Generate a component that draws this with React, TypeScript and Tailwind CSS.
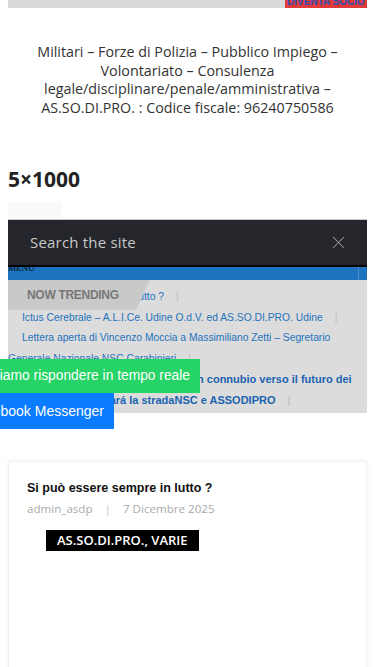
import { X } from "lucide-react";

const sans = "font-['Open_Sans',sans-serif]";
const arial = "font-['Liberation_Sans',Arial,sans-serif]";

function Sep() {
  return <span className="inline-block font-normal text-[#bbb] px-[12px]">|</span>;
}

export default function App() {
  return (
    <div className="w-[375px] min-h-[667px] bg-white relative overflow-hidden">
      {/* Top bar */}
      <div className="flex px-2 h-2">
        <div className="flex-1 bg-[#d9d9d9]" />
        <div className={`w-[82px] bg-[#e23a3a] overflow-hidden ${arial}`}>
          <div className="text-[10px] font-bold leading-[12px] -mt-[4px] text-[#2d4fb5] text-center whitespace-nowrap">DIVENTA SOCIO</div>
        </div>
      </div>

      {/* Tagline */}
      <p className={`${sans} mt-[35px] text-center text-[14.3px] leading-[18.5px] text-[#333] whitespace-nowrap`}>
        Militari – Forze di Polizia – Pubblico Impiego –<br />
        Volontariato – Consulenza<br />
        legale/disciplinare/penale/amministrativa –<br />
        AS.SO.DI.PRO. : Codice fiscale: 96240750586
      </p>

      {/* 5x1000 */}
      <h2 className={`${sans} mt-[50px] px-2 text-[21px] font-bold leading-[24px] text-[#222]`}>5×1000</h2>

      <div className="mx-2 mt-[11px] w-[53px] h-[15px] bg-[#f9f9f9]" />

      {/* Search overlay */}
      <div className="mx-2 mt-[2px]">
        <div className="h-[46px] bg-[#25262b] border-t border-[#c9c9c9] flex items-center justify-between pl-[22px] pr-[18px]">
          <span className={`${sans} text-[15px] text-[#c8c8c8] tracking-[0.2px]`}>Search the site</span>
          <X size={21} strokeWidth={1.2} className="text-[#9a9a9a]" />
        </div>
        <div className="h-[2px] bg-black" />
        <div className="h-[13px] bg-[#1e73be] overflow-hidden flex">
          <span className="font-['Liberation_Serif',serif] text-[9px] leading-[9px] -mt-[3px] text-black flex-1">MENU</span>
          <span className="w-px bg-[#4b8fd0] mr-[8px]" />
        </div>

        {/* Trending */}
        <div className={`relative bg-[#dcdcdc] pt-[7px] pb-[2px] ${arial} text-[10.3px] leading-[20.6px] text-[#1e73be]`}>
          <div className="pl-[14px] whitespace-nowrap">Si può essere sempre in lutto ?<Sep /></div>
          <div className="pl-[14px] whitespace-nowrap">Ictus Cerebrale – A.L.I.Ce. Udine O.d.V. ed AS.SO.DI.PRO. Udine<Sep /></div>
          <div className="pl-[14px] whitespace-nowrap">Lettera aperta di Vincenzo Moccia a Massimiliano Zetti – Segretario</div>
          <div className="whitespace-nowrap">Generale Nazionale NSC Carabinieri<Sep /></div>
          <div className="pl-[14px] whitespace-nowrap font-bold text-[11px] text-[#1a63b0]">NSC Carabinieri e ASSODIPRO: un connubio verso il futuro dei</div>
          <div className="whitespace-nowrap font-bold text-[11px] text-[#1a63b0]">cittadini: l'Europa sará la stradaNSC e ASSODIPRO<Sep /></div>

          <div className="absolute left-0 top-0 h-[30px] w-[142px] bg-[#c9c9c9] flex items-center pl-[19px] [clip-path:polygon(0_0,100%_0,90%_100%,0_100%)]">
            <span className="text-[12px] text-[#777] font-bold tracking-[-0.3px]">NOW TRENDING</span>
          </div>
        </div>
      </div>

      {/* Post card */}
      <div className="mx-2 mt-[48px] bg-white border border-[#f0f0f0] shadow-[0_0_6px_rgba(0,0,0,0.06)] min-h-[220px] pt-[18px] pl-[18px]">
        <h3 className={`${arial} text-[12.5px] font-bold text-[#111] leading-[16px]`}>Si può essere sempre in lutto ?</h3>
        <div className={`${sans} mt-[6px] text-[11.6px] text-[#aaa] leading-[14px]`}>
          admin_asdp<span className="px-[12px] text-[#ccc]">|</span>7 Dicembre 2025
        </div>
        <div className={`${sans} inline-block mt-[14px] ml-[19px] bg-black text-white text-[13px] font-semibold px-[11px] leading-[21px]`}>
          AS.SO.DI.PRO., VARIE
        </div>
      </div>

      {/* Chat widgets */}
      <div className={`absolute left-0 top-[359px] ${arial} text-white`}>
        <div className="w-[200px] h-[34px] bg-[#25d366] overflow-hidden flex items-center justify-end pr-[10px] whitespace-nowrap text-[13.8px]">
          Possiamo rispondere in tempo reale
        </div>
        <div className="w-[114px] h-[36px] bg-[#0a7cff] overflow-hidden flex items-center justify-end pr-[10px] whitespace-nowrap text-[14px]">
          Facebook Messenger
        </div>
      </div>
    </div>
  );
}
